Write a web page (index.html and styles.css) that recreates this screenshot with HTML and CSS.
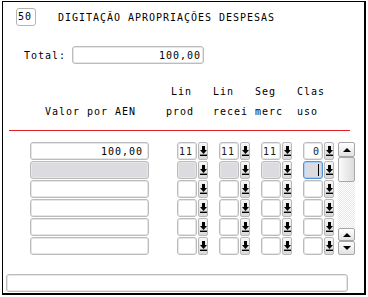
FILE: index.html
```html
<!DOCTYPE html>
<html>
<head>
<meta charset="utf-8">
<link rel="stylesheet" href="styles.css">
</head>
<body>
<svg class="defs" width="0" height="0">
  <symbol id="dn" viewBox="0 0 7 10">
    <path d="M2 0h3v4h2l-3.5 4L0 4h2z" fill="#000"/>
    <rect x="0" y="8.6" width="7" height="1.4" fill="#000"/>
  </symbol>
</svg>
<div class="window">
  <div class="title-row">
    <div class="num">50</div>
    <div class="title">DIGITAÇÃO APROPRIAÇÕES DESPESAS</div>
  </div>
  <div class="total-row">
    <span class="label">Total:</span>
    <div class="field total">100,00</div>
  </div>
  <div class="header">
    <div class="h h-val"><span>&nbsp;</span><span>Valor por AEN</span></div>
    <div class="h h-prod"><span class="l1">Lin</span><span>prod</span></div>
    <div class="h h-recei"><span>Lin</span><span>recei</span></div>
    <div class="h h-merc"><span class="l1">Seg</span><span>merc</span></div>
    <div class="h h-clas"><span>Clas</span><span>uso</span></div>
  </div>
  <div class="rule"></div>
  <div class="table">
    <div class="rows">
      <div class="row">
        <div class="field val">100,00</div>
        <div class="grp"><div class="field sm left">11</div><div class="btn"><svg class="ic"><use href="#dn"/></svg></div></div>
        <div class="grp"><div class="field sm left">11</div><div class="btn"><svg class="ic"><use href="#dn"/></svg></div></div>
        <div class="grp"><div class="field sm left">11</div><div class="btn"><svg class="ic"><use href="#dn"/></svg></div></div>
        <div class="grp"><div class="field sm">0</div><div class="btn"><svg class="ic"><use href="#dn"/></svg></div></div>
      </div>
      <div class="row">
        <div class="field val grey"></div>
        <div class="grp"><div class="field sm grey"></div><div class="btn"><svg class="ic"><use href="#dn"/></svg></div></div>
        <div class="grp"><div class="field sm grey"></div><div class="btn"><svg class="ic"><use href="#dn"/></svg></div></div>
        <div class="grp"><div class="field sm grey"></div><div class="btn"><svg class="ic"><use href="#dn"/></svg></div></div>
        <div class="grp"><div class="field sm grey focus"><span class="caret"></span></div><div class="btn"><svg class="ic"><use href="#dn"/></svg></div></div>
      </div>
      <div class="row">
        <div class="field val"></div>
        <div class="grp"><div class="field sm"></div><div class="btn"><svg class="ic"><use href="#dn"/></svg></div></div>
        <div class="grp"><div class="field sm"></div><div class="btn"><svg class="ic"><use href="#dn"/></svg></div></div>
        <div class="grp"><div class="field sm"></div><div class="btn"><svg class="ic"><use href="#dn"/></svg></div></div>
        <div class="grp"><div class="field sm"></div><div class="btn"><svg class="ic"><use href="#dn"/></svg></div></div>
      </div>
      <div class="row">
        <div class="field val"></div>
        <div class="grp"><div class="field sm"></div><div class="btn"><svg class="ic"><use href="#dn"/></svg></div></div>
        <div class="grp"><div class="field sm"></div><div class="btn"><svg class="ic"><use href="#dn"/></svg></div></div>
        <div class="grp"><div class="field sm"></div><div class="btn"><svg class="ic"><use href="#dn"/></svg></div></div>
        <div class="grp"><div class="field sm"></div><div class="btn"><svg class="ic"><use href="#dn"/></svg></div></div>
      </div>
      <div class="row">
        <div class="field val"></div>
        <div class="grp"><div class="field sm"></div><div class="btn"><svg class="ic"><use href="#dn"/></svg></div></div>
        <div class="grp"><div class="field sm"></div><div class="btn"><svg class="ic"><use href="#dn"/></svg></div></div>
        <div class="grp"><div class="field sm"></div><div class="btn"><svg class="ic"><use href="#dn"/></svg></div></div>
        <div class="grp"><div class="field sm"></div><div class="btn"><svg class="ic"><use href="#dn"/></svg></div></div>
      </div>
      <div class="row">
        <div class="field val"></div>
        <div class="grp"><div class="field sm"></div><div class="btn"><svg class="ic"><use href="#dn"/></svg></div></div>
        <div class="grp"><div class="field sm"></div><div class="btn"><svg class="ic"><use href="#dn"/></svg></div></div>
        <div class="grp"><div class="field sm"></div><div class="btn"><svg class="ic"><use href="#dn"/></svg></div></div>
        <div class="grp"><div class="field sm"></div><div class="btn"><svg class="ic"><use href="#dn"/></svg></div></div>
      </div>
    </div>
    <div class="scroll">
      <div class="sbtn s-up1"><span class="tri up"></span></div>
      <div class="thumb"></div>
      <div class="track"></div>
      <div class="sbtn s-up2"><span class="tri up"></span></div>
      <div class="sbtn s-dn"><span class="tri down"></span></div>
    </div>
  </div>
  <div class="field bottom"></div>
</div>
</body>
</html>
```

FILE: styles.css
```css
* { box-sizing: border-box; }
html, body { margin: 0; padding: 0; background: #fff; }
body {
  width: 368px;
  height: 297px;
  overflow: hidden;
  font-family: "DejaVu Sans Mono", "Liberation Mono", monospace;
  font-size: 10px;
  letter-spacing: 0.98px;
  color: #000;
}
.defs { position: absolute; width: 0; height: 0; }
.window {
  margin: 1px 0 0 2px;
  width: 364px;
  height: 294px;
  border-style: solid;
  border-color: #000;
  border-width: 1px 2px 2px 1px;
  background: #fff;
  display: flex;
  flex-direction: column;
}
.title-row {
  margin-top: 6px;
  padding-left: 13px;
  height: 18px;
  display: flex;
  align-items: center;
}
.num {
  width: 20px;
  height: 18px;
  border: 1px solid #b4b4b4;
  border-radius: 3px;
  padding-left: 1px;
  line-height: 16px;
}
.title { margin-left: 22px; }
.total-row {
  margin-top: 20px;
  padding-left: 21px;
  height: 18px;
  display: flex;
  align-items: center;
}
.label { width: 48px; }
.field {
  height: 18px;
  border: 1px solid #bcbcbc;
  border-radius: 3px;
  box-shadow: inset 0 0 0 1px #e6e6e6;
  background: #fff;
  line-height: 17px;
  text-align: right;
  white-space: nowrap;
}
.total { width: 132px; padding-right: 2px; }
.header {
  margin-top: 18px;
  display: flex;
  line-height: 20px;
  height: 40px;
}
.h { display: flex; flex-direction: column; white-space: pre; }
.h-val { width: 163px; padding-left: 42px; }
.h-prod { width: 47px; }
.h-prod .l1 { padding-left: 5px; }
.h-recei { width: 42px; }
.h-merc { width: 42px; }
.h-clas { width: 50px; }
.rule {
  margin: 8px 0 0 6px;
  width: 341px;
  height: 1px;
  background: #e3202a;
}
.table {
  margin-top: 11px;
  padding-left: 27px;
  display: flex;
}
.rows { display: flex; flex-direction: column; gap: 1px; }
.row { display: flex; height: 18px; }
.val { width: 119px; padding-right: 5px; }
.grp { display: flex; width: 31px; margin-left: 11px; }
.row .val + .grp { margin-left: 28px; }
.sm { width: 20px; padding-right: 2px; color: #1c1c1c; }
.sm.left { text-align: left; padding-left: 1px; padding-right: 0; }
.grey { background: #dcdce0; }
.focus {
  border-color: #4d93e0;
  box-shadow: inset 0 0 0 1px #a9cdf3;
  position: relative;
}
.caret {
  position: absolute;
  left: 14px;
  top: 2px;
  width: 1px;
  height: 12px;
  background: #000;
}
.btn {
  margin-left: 1px;
  width: 10px;
  height: 18px;
  border: 1px solid #b8b8b8;
  border-radius: 2px;
  background: linear-gradient(#f6f6f6, #dadada);
  display: flex;
  align-items: center;
  justify-content: center;
}
.ic { width: 7px; height: 10px; display: block; }
.scroll {
  margin-left: 4px;
  width: 17px;
  height: 113px;
  display: flex;
  flex-direction: column;
}
.sbtn {
  border: 1px solid #a6a6a6;
  border-radius: 2px;
  background: linear-gradient(#ffffff, #e2e2e2);
  display: flex;
  align-items: center;
  justify-content: center;
}
.s-up1 { height: 15px; }
.s-up2 { height: 13px; }
.s-dn { height: 14px; }
.thumb {
  height: 25px;
  border: 1px solid #a8a8a8;
  border-radius: 2px;
  background: linear-gradient(90deg, #fbfbfb, #dcdcdc);
}
.track {
  height: 46px;
  background: repeating-conic-gradient(#e8e8e8 0 25%, #ffffff 0 50%) 0 0 / 2px 2px;
}
.tri { width: 0; height: 0; border-left: 4px solid transparent; border-right: 4px solid transparent; }
.tri.up { border-bottom: 4px solid #000; }
.tri.down { border-top: 4px solid #000; }
.bottom {
  margin: 19px 0 0 3px;
  width: 342px;
  height: 18px;
}
```
